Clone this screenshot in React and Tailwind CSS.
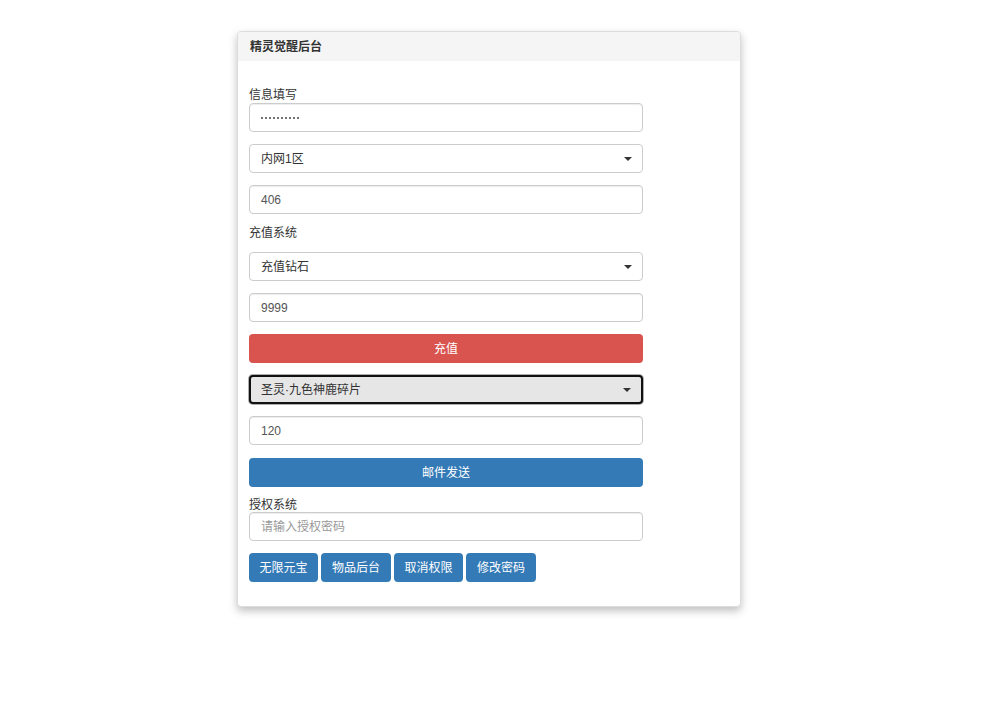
import React from "react";

const font = { fontFamily: '"Liberation Sans", "Noto Sans CJK SC", sans-serif' };

function Caret() {
  return (
    <span className="absolute right-[10px] top-1/2 -translate-y-1/2 w-0 h-0 border-l-[4px] border-r-[4px] border-t-[4px] border-l-transparent border-r-transparent border-t-[#333]" />
  );
}

function Input({ value, placeholder }) {
  return (
    <div className="h-[29px] w-full rounded-[4px] border border-[#cccccc] bg-white flex items-center px-[11px] text-[12px] shadow-[inset_0_1px_1px_rgba(0,0,0,0.075)]">
      <span className={placeholder ? "text-[#999]" : "text-[#555]"}>{value || placeholder}</span>
    </div>
  );
}

function Password() {
  return (
    <div className="h-[29px] w-full rounded-[4px] border border-[#cccccc] bg-white flex items-center px-[11px] gap-[2px] shadow-[inset_0_1px_1px_rgba(0,0,0,0.075)]">
      {Array.from({ length: 10 }).map((_, i) => (
        <span key={i} className="w-[2px] h-[2px] rounded-full bg-[#444]" />
      ))}
    </div>
  );
}

function Select({ value, focused }) {
  return (
    <div
      className={
        "relative h-[29px] w-full rounded-[4px] flex items-center text-[12px] text-[#333] " +
        (focused
          ? "border-2 border-[#111] bg-[#e6e6e6] px-[10px] shadow-[0_0_0_1px_#adadad]"
          : "border border-[#cccccc] bg-white px-[11px]")
      }
    >
      <span>{value}</span>
      <Caret />
    </div>
  );
}

function Btn({ children, color }) {
  return (
    <div className={"h-[29px] w-full rounded-[4px] flex items-center justify-center text-white text-[12px] " + color}>
      {children}
    </div>
  );
}

export default function App() {
  return (
    <div className="w-[993px] h-[714px] bg-white" style={font}>
      <div className="pt-[31px] pl-[237px]">
        <div className="w-[504px] h-[576px] bg-white rounded-[4px] border border-[#ddd] shadow-[0_4px_8px_rgba(0,0,0,0.25)] overflow-hidden">
          <div className="h-[29px] bg-[#f5f5f5] flex items-center px-[12px] text-[12px] font-bold text-[#333]">
            精灵觉醒后台
          </div>
          <div className="px-[11px] w-[416px]">
            <div className="mt-[28px] text-[12px] text-[#333] leading-[13px]">信息填写</div>
            <div className="mt-[1px]">
              <Password />
            </div>
            <div className="mt-[12px]">
              <Select value="内网1区" />
            </div>
            <div className="mt-[12px]">
              <Input value="406" />
            </div>
            <div className="mt-[12px] text-[12px] text-[#333] leading-[14px]">充值系统</div>
            <div className="mt-[12px]">
              <Select value="充值钻石" />
            </div>
            <div className="mt-[12px]">
              <Input value="9999" />
            </div>
            <div className="mt-[12px]">
              <Btn color="bg-[#d9534f]">充值</Btn>
            </div>
            <div className="mt-[12px]">
              <Select value="圣灵·九色神鹿碎片" focused />
            </div>
            <div className="mt-[12px]">
              <Input value="120" />
            </div>
            <div className="mt-[13px]">
              <Btn color="bg-[#337ab7]">邮件发送</Btn>
            </div>
            <div className="mt-[11px] text-[12px] text-[#333] leading-[14px]">授权系统</div>
            <div>
              <Input placeholder="请输入授权密码" />
            </div>
            <div className="mt-[12px] flex gap-[3px]">
              {[
                ["无限元宝", "w-[69px]"],
                ["物品后台", "w-[70px]"],
                ["取消权限", "w-[69px]"],
                ["修改密码", "w-[70px]"],
              ].map(([t, w]) => (
                <div
                  key={t}
                  className={"h-[29px] rounded-[4px] bg-[#337ab7] text-white text-[12px] flex items-center justify-center " + w}
                >
                  {t}
                </div>
              ))}
            </div>
          </div>
        </div>
      </div>
    </div>
  );
}
